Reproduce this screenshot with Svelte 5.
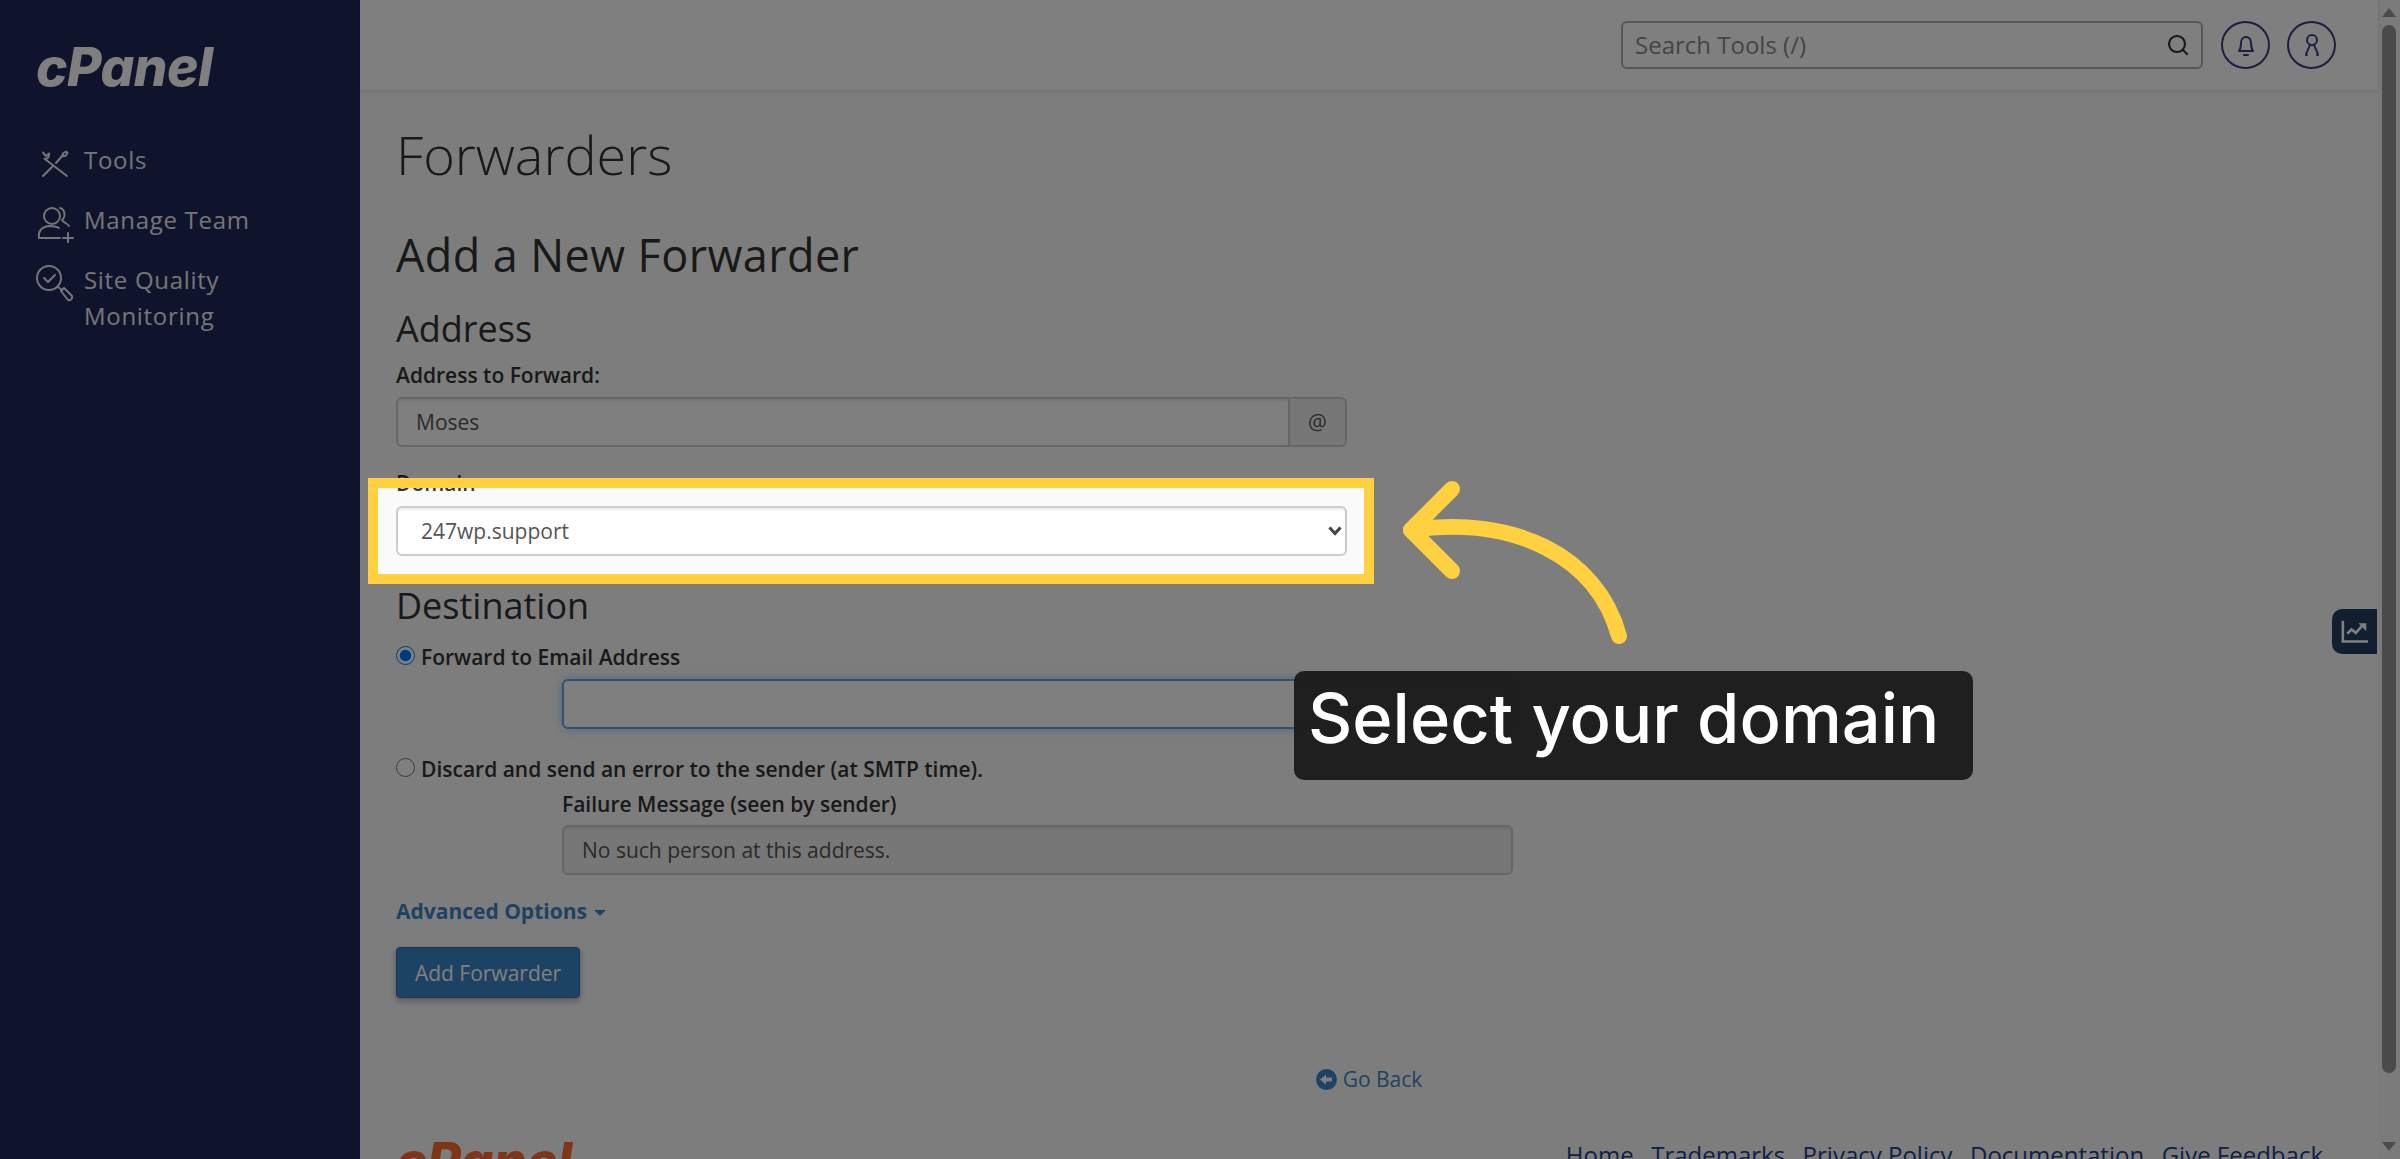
<script>
	const footerLinks = ['Home', 'Trademarks', 'Privacy Policy', 'Documentation', 'Give Feedback'];
</script>

<div class="shell">
	<aside class="sidebar">
		<div class="logo">cPanel</div>
		<nav>
			<a class="nav-item" href="#tools">
				<span class="icon">
					<svg class="tools" width="28" height="28" viewBox="0 0 28 28" fill="none" stroke="currentColor" stroke-width="2" stroke-linecap="round" stroke-linejoin="round">
						<path d="M2 2.500l3 3.500 3-2.500c.5 3.500-1.500 6-4.500 5.200L26 26" />
						<path d="M2 26l9.500-9.500M15 13l7-8" />
						<path d="M21 6l1-2.500 3-2 1.500 1.500-2 3z" />
					</svg>
				</span>
				<span>Tools</span>
			</a>
			<a class="nav-item" href="#team">
				<span class="icon">
					<svg width="38" height="38" viewBox="0 0 38 38" fill="none" stroke="currentColor" stroke-width="2" stroke-linecap="round" stroke-linejoin="round">
						<circle cx="16" cy="11" r="8" />
						<path d="M24 3c5 1 6 9 2 12 2 3 5 3 7 6" />
						<path d="M24 33H3c-1-7 3-11 10-12 4 0 7 0 10 2" />
						<path d="M27 33h10M32 28v10" />
					</svg>
				</span>
				<span>Manage Team</span>
			</a>
			<a class="nav-item" href="#quality">
				<span class="icon">
					<svg width="38" height="38" viewBox="0 0 38 38" fill="none" stroke="currentColor" stroke-width="2" stroke-linecap="round" stroke-linejoin="round">
						<circle cx="13" cy="13" r="12" />
						<path d="M8 13l4 4 7-7" />
						<path d="M22 22l4 3" />
						<path d="M25 26l3-3 8 8c1 3-2 5-4 4z" />
					</svg>
				</span>
				<span>Site Quality<br />Monitoring</span>
			</a>
		</nav>
	</aside>

	<div class="main">
		<header class="topbar">
			<div class="search">
				<input type="text" placeholder="Search Tools (/)" />
				<svg width="22" height="22" viewBox="0 0 22 22" fill="none" stroke="#333" stroke-width="2.200" stroke-linecap="round">
					<circle cx="10" cy="10" r="8" />
					<path d="M16 16l4 4" />
				</svg>
			</div>
			<button class="round" aria-label="Notifications">
				<svg width="20" height="24" viewBox="0 0 20 24" fill="none" stroke="#383f80" stroke-width="2" stroke-linecap="round" stroke-linejoin="round">
					<path d="M3 18h14c-1.500-2-2-4-2-8 0-3.500-2-6-5-6s-5 2.500-5 6c0 4-.5 6-2 8z" />
					<path d="M8 22h4" />
				</svg>
			</button>
			<button class="round" aria-label="Account">
				<svg width="18" height="24" viewBox="0 0 18 24" fill="none" stroke="#383f80" stroke-width="2" stroke-linecap="round" stroke-linejoin="round">
					<circle cx="9" cy="7" r="5" />
					<path d="M3 22c0-2 2-5 4-10M15 22c0-2-2-5-4-10M3 22h1M15 22h-1" />
				</svg>
			</button>
		</header>

		<div class="content">
			<h1>Forwarders</h1>
			<h2>Add a New Forwarder</h2>
			<h3>Address</h3>

			<label class="field-label" for="address">Address to Forward:</label>
			<div class="input-group">
				<input id="address" class="control" type="text" value="Moses" />
				<span class="addon">@</span>
			</div>

			<label class="field-label domain-label" for="domain">Domain</label>
			<div class="select-wrap">
				<select id="domain" class="control domain">
					<option>247wp.support</option>
				</select>
				<svg class="chevron" width="14" height="10" viewBox="0 0 14 10" fill="none" stroke="#444" stroke-width="3.200">
					<path d="M1.500 1.500L7 7.500l5.500-6" />
				</svg>
			</div>

			<h3 class="destination">Destination</h3>

			<label class="radio first">
				<input type="radio" name="dest" checked />
				<span>Forward to Email Address</span>
			</label>
			<div class="indent">
				<input class="control focused" type="text" />
			</div>

			<label class="radio second">
				<input type="radio" name="dest" />
				<span>Discard and send an error to the sender (at SMTP time).</span>
			</label>
			<div class="indent">
				<label class="field-label failure" for="failure">Failure Message (seen by sender)</label>
				<input id="failure" class="control readonly" type="text" value="No such person at this address." readonly />
			</div>

			<a class="advanced" href="#advanced">Advanced Options <i class="caret"></i></a>

			<button class="primary">Add Forwarder</button>

			<a class="back" href="#back">
				<svg width="21" height="21" viewBox="0 0 21 21">
					<circle cx="10.500" cy="10.500" r="10.500" fill="#3a86c8" />
					<path d="M4 10.500l6-5v3h6v4h-6v3z" fill="#fff" />
				</svg>
				Go Back
			</a>

			<footer>
				<div class="footer-logo">cPanel</div>
				<div class="footer-links">
					{#each footerLinks as link}
						<a href="#footer">{link}</a>
					{/each}
				</div>
			</footer>
		</div>

		<button class="stats" aria-label="Statistics">
			<svg width="32" height="30" viewBox="0 0 32 30" fill="none" stroke="#fff" stroke-width="3">
				<path d="M2 2v24h29" />
				<path d="M7 17l5-5 5 4 7-8" />
				<path d="M20 5h9v9z" fill="#fff" stroke="none" />
			</svg>
		</button>
	</div>

	<div class="scrollbar">
		<i class="arrow up"></i>
		<div class="thumb"></div>
		<i class="arrow down"></i>
	</div>
</div>

<div class="highlight"></div>

<svg class="pointer" width="240" height="170" viewBox="0 0 240 170" fill="none" stroke="#ffd03f" stroke-width="16" stroke-linecap="round" stroke-linejoin="round">
	<path d="M60 9L19 50l41 41" />
	<path d="M19 50C120 35 205 75 227 156" />
</svg>

<div class="callout">Select your domain</div>

<style>
	:global(body) {
		overflow: hidden;
		font-family: 'Open Sans', 'Liberation Sans', sans-serif;
		font-size: 21px;
		color: #333;
	}
	.shell {
		display: flex;
		height: 100vh;
		overflow: hidden;
		background: #fafafa;
	}
	.sidebar {
		width: 360px;
		flex: none;
		background: #202658;
		color: #fff;
		padding: 0 0 0 36px;
		box-sizing: border-box;
	}
	.logo {
		font-family: Inter, sans-serif;
		font-size: 53px;
		font-weight: 800;
		font-style: italic;
		letter-spacing: -0.5px;
		line-height: 60px;
		margin-top: 37px;
		color: #fff;
	}
	nav {
		margin-top: 45px;
	}
	.nav-item {
		display: flex;
		color: #e6ecf2;
		text-decoration: none;
		font-weight: 500;
		font-size: 24px;
		letter-spacing: 0.7px;
		line-height: 36px;
		gap: 10px;
		margin-bottom: 24px;
		align-items: flex-start;
	}
	.icon {
		flex: none;
		width: 38px;
		height: 36px;
		box-sizing: border-box;
		padding-top: 3px;
		display: flex;
		justify-content: center;
	}
	.icon svg {
		display: block;
		flex: none;
	}
	.tools {
		margin-top: 5px;
	}
	.main {
		flex: 1;
		position: relative;
		min-width: 0;
		display: flex;
		flex-direction: column;
	}
	.topbar {
		height: 90px;
		flex: none;
		background: #fff;
		box-shadow: 0 1px 4px rgba(0, 0, 0, 0.12);
		display: flex;
		align-items: center;
		justify-content: flex-end;
		padding: 0 42px 0 0;
		gap: 17px;
		box-sizing: border-box;
	}
	.search {
		width: 582px;
		height: 48px;
		box-sizing: border-box;
		border: 2px solid #a9acc0;
		border-radius: 6px;
		display: flex;
		align-items: center;
		padding: 0 12px;
		margin-right: 1px;
		background: #fff;
	}
	.search input {
		flex: 1;
		border: none;
		outline: none;
		background: none;
		font: inherit;
		font-size: 24px;
		min-width: 0;
		padding: 0 0 2px;
	}
	.search input::placeholder {
		color: #8a8a8a;
	}
	.round {
		width: 49px;
		height: 48px;
		border: 2px solid #383f80;
		border-radius: 50%;
		background: #fff;
		padding: 0;
		display: flex;
		align-items: center;
		justify-content: center;
	}
	.content {
		padding: 0 0 0 36px;
		display: flex;
		flex-direction: column;
		align-items: flex-start;
	}
	h1 {
		font-size: 54px;
		font-weight: 300;
		line-height: 60px;
		margin: 34px 0 0;
	}
	h2 {
		font-size: 45px;
		font-weight: 500;
		letter-spacing: 0.4px;
		line-height: 50px;
		margin: 46px 0 0;
	}
	h3 {
		font-size: 36px;
		font-weight: 500;
		line-height: 40px;
		margin: 29px 0 0;
	}
	.field-label {
		font-weight: 600;
		line-height: 30px;
		display: block;
	}
	h3 + .field-label {
		margin-top: 11px;
	}
	.control {
		box-sizing: border-box;
		width: 951px;
		height: 50px;
		border: 2px solid #ccc;
		border-radius: 6px;
		background: #fff;
		box-shadow: inset 0 2px 2px rgba(0, 0, 0, 0.075);
		font: inherit;
		color: #555;
		padding: 0 18px;
		outline: none;
	}
	.input-group {
		display: flex;
		margin-top: 7px;
		width: 951px;
	}
	.input-group .control {
		width: auto;
		flex: 1;
		min-width: 0;
		border-radius: 6px 0 0 6px;
	}
	.addon {
		width: 57px;
		box-sizing: border-box;
		border: 2px solid #ccc;
		border-left: none;
		border-radius: 0 6px 6px 0;
		background: #eee;
		color: #555;
		display: flex;
		align-items: center;
		justify-content: center;
	}
	.domain-label {
		margin-top: 21px;
	}
	.select-wrap {
		position: relative;
		margin-top: 8px;
	}
	.domain {
		display: block;
		appearance: none;
		padding-left: 23px;
	}
	.chevron {
		position: absolute;
		right: 5px;
		top: 20px;
	}
	.destination {
		margin-top: 30px;
	}
	.radio {
		display: flex;
		align-items: center;
		font-weight: 600;
		line-height: 30px;
		gap: 6px;
	}
	.radio input {
		margin: -3px 0 0;
		width: 19px;
		height: 19px;
	}
	.radio.first {
		margin-top: 16px;
	}
	.radio.second {
		margin-top: 25px;
	}
	.indent {
		margin-left: 166px;
		display: flex;
		flex-direction: column;
	}
	.first + .indent {
		margin-top: 7px;
	}
	.focused {
		border-color: #5aa5e0;
		box-shadow: 0 0 10px rgba(102, 175, 233, 0.6);
	}
	.failure {
		margin-top: 5px;
		margin-bottom: 6px;
	}
	.readonly {
		background: #eee;
	}
	.advanced {
		margin-top: 21px;
		font-weight: 700;
		color: #3a86c8;
		text-decoration: none;
		line-height: 30px;
	}
	.caret {
		display: inline-block;
		border: 6px solid transparent;
		border-top-color: #3a86c8;
		border-bottom: none;
		vertical-align: middle;
		margin-left: 2px;
	}
	.primary {
		margin-top: 21px;
		width: 184px;
		height: 51px;
		border: 1px solid #2d6da5;
		border-radius: 4px;
		background: #3a86c8;
		color: #fff;
		font: inherit;
		box-shadow: 0 3px 6px rgba(0, 0, 0, 0.3);
	}
	.back {
		align-self: center;
		margin: 66px 0 0 -36px;
		color: #3a86c8;
		text-decoration: none;
		display: flex;
		align-items: center;
		gap: 6px;
		line-height: 30px;
	}
	footer {
		align-self: stretch;
		display: flex;
		justify-content: space-between;
		align-items: flex-start;
		margin-top: 44px;
		padding-right: 55px;
	}
	.footer-logo {
		font-family: Inter, sans-serif;
		font-size: 52px;
		font-weight: 800;
		font-style: italic;
		line-height: 52px;
		margin-top: -2px;
		color: #ff6c2c;
	}
	.footer-links {
		display: flex;
		gap: 17.500px;
		font-size: 24px;
	}
	.footer-links a {
		color: #243f8c;
		text-decoration: none;
	}
	.stats {
		position: absolute;
		right: 1px;
		top: 609px;
		width: 45px;
		height: 45px;
		padding: 0;
		border: none;
		border-radius: 10px 0 0 10px;
		background: #243f60;
		display: flex;
		align-items: center;
		justify-content: center;
	}
	.stats svg {
		width: 28px;
		height: 26px;
	}
	.scrollbar {
		width: 22px;
		flex: none;
		background: #f6f6f6;
		display: flex;
		flex-direction: column;
		align-items: center;
		padding: 8px 0;
		box-sizing: border-box;
	}
	.thumb {
		width: 14px;
		height: 1048px;
		background: #969696;
		border-radius: 7px;
		margin: 8px 0 auto;
	}
	.arrow {
		width: 0;
		height: 0;
		border: 7px solid transparent;
		border-top: none;
		border-bottom: 9px solid #969696;
	}
	.arrow.down {
		transform: rotate(180deg);
	}
	.highlight {
		position: fixed;
		left: 368px;
		top: 478px;
		width: 1006px;
		height: 106px;
		box-sizing: border-box;
		border: 10px solid #ffd03f;
		box-shadow: 0 0 0 3000px rgba(0, 0, 0, 0.5);
	}
	.pointer {
		position: fixed;
		left: 1392px;
		top: 480px;
	}
	.callout {
		position: fixed;
		left: 1294px;
		top: 671px;
		width: 679px;
		height: 109px;
		box-sizing: border-box;
		padding-left: 14px;
		background: rgba(26, 26, 26, 0.95);
		border-radius: 10px;
		color: #fff;
		font-family: Inter, sans-serif;
		font-weight: 500;
		font-size: 68.600px;
		line-height: 95px;
		white-space: nowrap;
	}
</style>
